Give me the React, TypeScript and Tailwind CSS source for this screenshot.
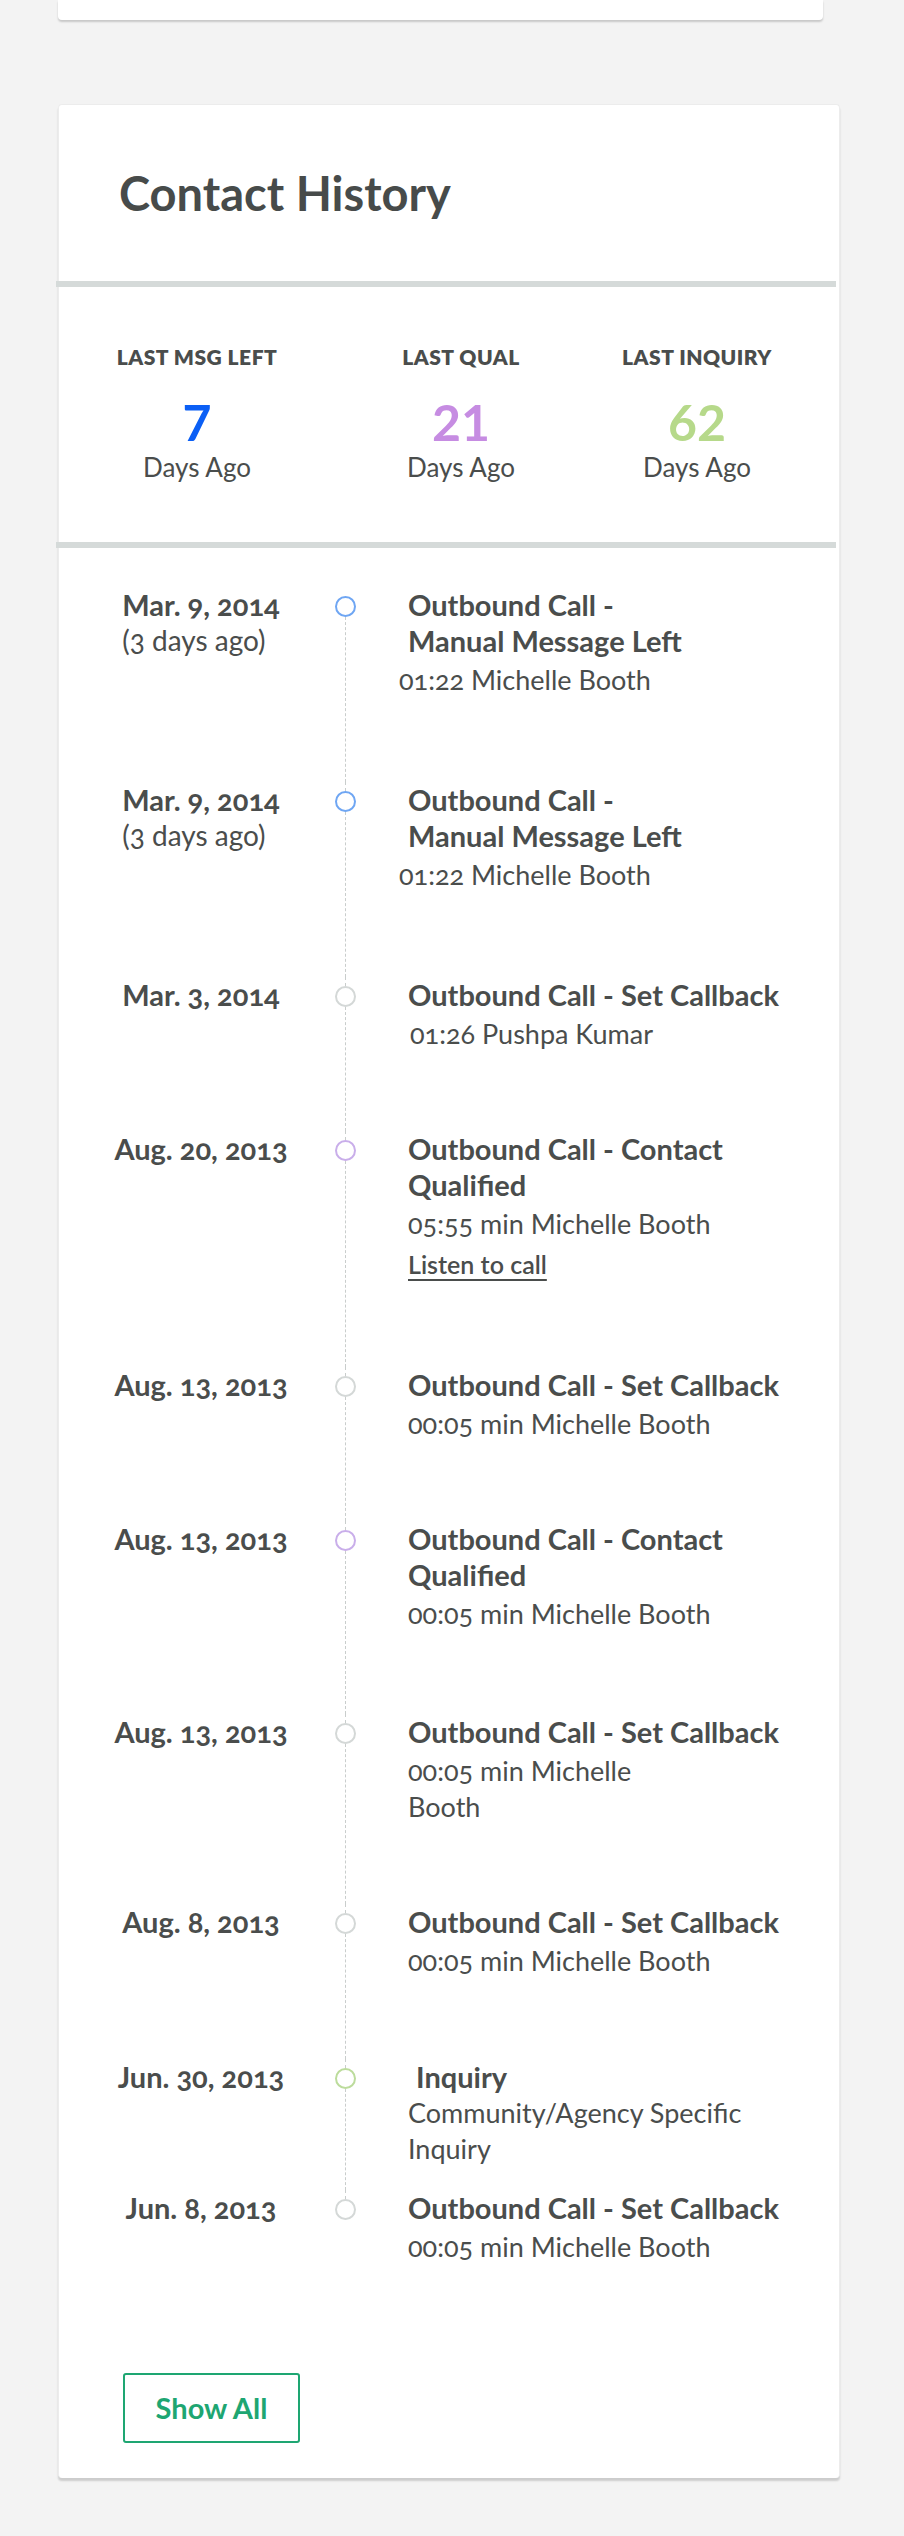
import React from "react";

type Entry = {
  date: string;
  ago?: string;
  dot: string;
  title: React.ReactNode;
  titleClass?: string;
  sub: React.ReactNode;
  subClass?: string;
  link?: boolean;
  pb: string;
};

const entries: Entry[] = [
  {
    date: "Mar. 9, 2014",
    ago: "(3 days ago)",
    dot: "border-[#6fa6f3]",
    title: (
      <>
        Outbound Call -<br />
        Manual Message Left
      </>
    ),
    sub: "01:22 Michelle Booth",
    subClass: "-ml-[9px]",
    pb: "pb-[84px]",
  },
  {
    date: "Mar. 9, 2014",
    ago: "(3 days ago)",
    dot: "border-[#6fa6f3]",
    title: (
      <>
        Outbound Call -<br />
        Manual Message Left
      </>
    ),
    sub: "01:22 Michelle Booth",
    subClass: "-ml-[9px]",
    pb: "pb-[84px]",
  },
  {
    date: "Mar. 3, 2014",
    dot: "border-[#d4d8d7]",
    title: "Outbound Call - Set Callback",
    sub: "01:26 Pushpa Kumar",
    subClass: "ml-[2px]",
    pb: "pb-[79px]",
  },
  {
    date: "Aug. 20, 2013",
    dot: "border-[#c9aeea]",
    title: (
      <>
        Outbound Call - Contact
        <br />
        Qualified
      </>
    ),
    sub: "05:55 min Michelle Booth",
    link: true,
    pb: "pb-[85px]",
  },
  {
    date: "Aug. 13, 2013",
    dot: "border-[#d4d8d7]",
    title: "Outbound Call - Set Callback",
    sub: "00:05 min Michelle Booth",
    pb: "pb-[79px]",
  },
  {
    date: "Aug. 13, 2013",
    dot: "border-[#c9aeea]",
    title: (
      <>
        Outbound Call - Contact
        <br />
        Qualified
      </>
    ),
    sub: "00:05 min Michelle Booth",
    pb: "pb-[82px]",
  },
  {
    date: "Aug. 13, 2013",
    dot: "border-[#d4d8d7]",
    title: "Outbound Call - Set Callback",
    sub: (
      <>
        00:05 min Michelle
        <br />
        Booth
      </>
    ),
    pb: "pb-[79px]",
  },
  {
    date: "Aug. 8, 2013",
    dot: "border-[#d4d8d7]",
    title: "Outbound Call - Set Callback",
    sub: "00:05 min Michelle Booth",
    pb: "pb-[80px]",
  },
  {
    date: "Jun. 30, 2013",
    dot: "border-[#bcdc9c]",
    title: "Inquiry",
    titleClass: "ml-[8px]",
    sub: (
      <>
        Community/Agency Specific
        <br />
        Inquiry
      </>
    ),
    subClass: "!mt-0 leading-[34px] text-[25px]",
    pb: "pb-[23px]",
  },
  {
    date: "Jun. 8, 2013",
    dot: "border-[#d4d8d7]",
    title: "Outbound Call - Set Callback",
    sub: "00:05 min Michelle Booth",
    pb: "pb-[40px]",
  },
];

const Stat = ({
  label,
  value,
  color,
  className,
}: {
  label: string;
  value: string;
  color: string;
  className?: string;
}) => (
  <div className={`w-[200px] flex flex-col items-center ${className ?? ""}`}>
    <div className="text-[21px] leading-[24px] font-extrabold tracking-[0.5px] uppercase whitespace-nowrap">
      {label}
    </div>
    <div className={`mt-[28px] text-[50px] leading-none font-bold ${color}`}>
      {value}
    </div>
    <div className="mt-[5px] text-[26px] leading-[30px]">Days Ago</div>
  </div>
);

const App = () => {
  return (
    <div className="min-h-[2536px] bg-[#f3f3f3] font-['Lato','Liberation_Sans',sans-serif] text-[#4a4d4c]">
      <div className="ml-[58px] w-[765px] h-[20px] bg-white rounded-b-[4px] shadow-[0_2px_2px_rgba(0,0,0,0.18)]" />

      <section className="mt-[84px] ml-[58px] w-[782px] bg-white rounded-[4px] border-x border-t border-[#ececec] shadow-[0_3px_2px_rgba(0,0,0,0.16)]">
        <h2 className="pt-[65px] pb-[64px] pl-[60px] text-[47px] leading-none font-bold text-[#474b4a]">
          Contact History
        </h2>
        <div className="-ml-[3px] mr-[3px] h-[6px] bg-[#d5dad9]" />

        <div className="flex pl-[38px] pt-[58px] pb-[60px]">
          <Stat label="Last Msg Left" value="7" color="text-[#0b5ff5]" />
          <Stat
            label="Last Qual"
            value="21"
            color="text-[#c68ce2]"
            className="ml-[64px]"
          />
          <Stat
            label="Last Inquiry"
            value="62"
            color="text-[#b6d98a]"
            className="ml-[36px]"
          />
        </div>
        <div className="-ml-[3px] mr-[3px] h-[6px] bg-[#d5dad9]" />

        <ul className="pt-[39px] pl-[42px] oldstyle-nums">
          {entries.map((e, i) => (
            <li key={i} className="flex items-stretch">
              <div className={`w-[200px] flex justify-center ${e.pb}`}>
                <div>
                  <div className="text-[29px] leading-[36px] font-bold whitespace-nowrap">
                    {e.date}
                  </div>
                  {e.ago && (
                    <div className="text-[28px] leading-[34px]">{e.ago}</div>
                  )}
                </div>
              </div>
              <div className="w-[88px] flex flex-col items-center">
                <div
                  className={`h-[9px] w-0 border-l border-dashed ${
                    i === 0 ? "border-transparent" : "border-[#c9cdcc]"
                  }`}
                />
                <div
                  className={`w-[21px] h-[21px] shrink-0 rounded-full border-2 bg-white ${e.dot}`}
                />
                <div
                  className={`flex-1 w-0 border-l border-dashed ${
                    i === entries.length - 1
                      ? "border-transparent"
                      : "border-[#c9cdcc]"
                  }`}
                />
              </div>
              <div className={`flex-1 pl-[19px] pr-[30px] ${e.pb}`}>
                <div
                  className={`text-[29px] leading-[36px] font-bold ${
                    e.titleClass ?? ""
                  }`}
                >
                  {e.title}
                </div>
                <div
                  className={`mt-[3px] text-[27px] leading-[36px] ${
                    e.subClass ?? ""
                  }`}
                >
                  {e.sub}
                </div>
                {e.link && (
                  <a
                    href="#"
                    className="mt-[4px] inline-block text-[25px] leading-[36px] font-semibold underline decoration-2 underline-offset-[5px]"
                  >
                    Listen to call
                  </a>
                )}
              </div>
            </li>
          ))}
        </ul>

        <div className="pl-[64px] pt-[68px] pb-[35px]">
          <button className="w-[177px] h-[70px] rounded-[3px] border-2 border-[#1ea672] text-[29px] font-bold text-[#1ea672]">
            Show All
          </button>
        </div>
      </section>
    </div>
  );
};

export default App;
